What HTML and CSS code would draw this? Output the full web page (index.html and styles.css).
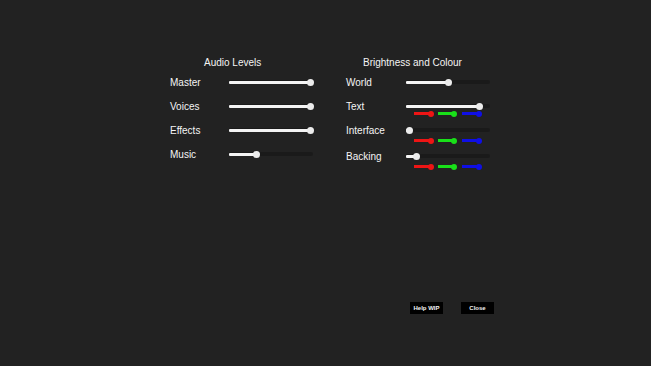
FILE: index.html
```html
<!DOCTYPE html>
<html lang="en">
<head>
    <meta charset="UTF-8">
    <meta name="viewport" content="width=device-width, initial-scale=1.0">
    <title>Settings</title>
    <link rel="stylesheet" href="styles.css">
</head>
<body>
    <main class="ajustes">
        <div class="columnas">
            <section class="columna columna-audio">
                <h2 class="titulo">Audio Levels</h2>

                <div class="grupo">
                    <div class="fila">
                        <span class="etiqueta">Master</span>
                        <div class="slider" style="--v:100%"><div class="rail"><span class="fill"></span><span class="knob"></span></div></div>
                    </div>
                </div>
                <div class="grupo">
                    <div class="fila">
                        <span class="etiqueta">Voices</span>
                        <div class="slider" style="--v:100%"><div class="rail"><span class="fill"></span><span class="knob"></span></div></div>
                    </div>
                </div>
                <div class="grupo">
                    <div class="fila">
                        <span class="etiqueta">Effects</span>
                        <div class="slider" style="--v:100%"><div class="rail"><span class="fill"></span><span class="knob"></span></div></div>
                    </div>
                </div>
                <div class="grupo">
                    <div class="fila">
                        <span class="etiqueta">Music</span>
                        <div class="slider" style="--v:31%"><div class="rail"><span class="fill"></span><span class="knob"></span></div></div>
                    </div>
                </div>
            </section>

            <section class="columna columna-brillo">
                <h2 class="titulo">Brightness and Colour</h2>

                <div class="grupo">
                    <div class="fila">
                        <span class="etiqueta">World</span>
                        <div class="slider" style="--v:50%"><div class="rail"><span class="fill"></span><span class="knob"></span></div></div>
                    </div>
                </div>

                <div class="grupo grupo-texto">
                    <div class="fila">
                        <span class="etiqueta">Text</span>
                        <div class="slider" style="--v:90%"><div class="rail"><span class="fill"></span><span class="knob"></span></div></div>
                    </div>
                    <div class="colores colores-juntos">
                        <div class="mini rojo" style="--v:84%"><span class="fill"></span><span class="knob"></span></div>
                        <div class="mini verde" style="--v:80%"><span class="fill"></span><span class="knob"></span></div>
                        <div class="mini azul" style="--v:85%"><span class="fill"></span><span class="knob"></span></div>
                    </div>
                </div>

                <div class="grupo grupo-interfaz">
                    <div class="fila">
                        <span class="etiqueta">Interface</span>
                        <div class="slider" style="--v:0%"><div class="rail"><span class="fill"></span><span class="knob"></span></div></div>
                    </div>
                    <div class="colores">
                        <div class="mini rojo" style="--v:84%"><span class="fill"></span><span class="knob"></span></div>
                        <div class="mini verde" style="--v:80%"><span class="fill"></span><span class="knob"></span></div>
                        <div class="mini azul" style="--v:85%"><span class="fill"></span><span class="knob"></span></div>
                    </div>
                </div>

                <div class="grupo grupo-fondo">
                    <div class="fila">
                        <span class="etiqueta">Backing</span>
                        <div class="slider" style="--v:10%"><div class="rail"><span class="fill"></span><span class="knob"></span></div></div>
                    </div>
                    <div class="colores">
                        <div class="mini rojo" style="--v:84%"><span class="fill"></span><span class="knob"></span></div>
                        <div class="mini verde" style="--v:80%"><span class="fill"></span><span class="knob"></span></div>
                        <div class="mini azul" style="--v:85%"><span class="fill"></span><span class="knob"></span></div>
                    </div>
                </div>
            </section>
        </div>

        <footer class="botones">
            <button class="boton">Help WIP</button>
            <button class="boton">Close</button>
        </footer>
    </main>
</body>
</html>
```

FILE: styles.css
```css
/* Pantalla de ajustes */
html, body {
    margin: 0;
    height: 100%;
}

body {
    background: #222222;
    color: #f4f4f4;
    font-family: "Liberation Sans", Arial, sans-serif;
    font-size: 10px;
}

.ajustes {
    height: 100vh;
    display: flex;
    flex-direction: column;
    box-sizing: border-box;
    padding-top: 57px;
    padding-bottom: 52px;
}

.columnas {
    display: flex;
    gap: 32px;
    padding-left: 170px;
}

.columna {
    display: flex;
    flex-direction: column;
    width: 144px;
}

.titulo {
    margin: 0 0 7px;
    height: 12px;
    line-height: 12px;
    font-size: 10px;
    font-weight: normal;
    white-space: nowrap;
}

.columna-audio .titulo {
    padding-left: 34px;
}

.columna-brillo .titulo {
    padding-left: 17px;
}

.grupo {
    margin-top: 12px;
}

.titulo + .grupo {
    margin-top: 0;
}

.columna-brillo .grupo-interfaz {
    margin-top: 7px;
}

.columna-brillo .grupo-fondo {
    margin-top: 6px;
}

.fila {
    display: flex;
    align-items: center;
    height: 12px;
}

.etiqueta {
    width: 59px;
    flex: none;
    line-height: 12px;
    padding-top: 1px;
}

.columna-brillo .etiqueta {
    width: 60px;
}

/* slider principal */
.slider {
    position: relative;
    width: 84px;
    height: 12px;
}

.slider::before {
    content: '';
    position: absolute;
    left: 0;
    right: 0;
    top: 4px;
    height: 4px;
    background: #1a1a1a;
    border-radius: 2px;
}

.rail {
    position: absolute;
    left: 3px;
    right: 3px;
    top: 0;
    bottom: 0;
}

.rail .fill {
    position: absolute;
    left: -3px;
    width: calc(var(--v) + 3px);
    top: 5px;
    height: 3px;
    background: #f4f4f4;
    border-radius: 1px;
}

.rail .knob {
    position: absolute;
    left: var(--v);
    top: 6.5px;
    width: 7px;
    height: 7px;
    margin: -3.5px 0 0 -3.5px;
    border-radius: 50%;
    background: #ececec;
}

/* sliders de color */
.colores {
    display: flex;
    gap: 4px;
    height: 8px;
    margin-left: 68px;
}

.colores-juntos {
    margin-top: -3px;
}

.mini {
    position: relative;
    width: 20px;
    height: 8px;
}

.mini .fill {
    position: absolute;
    left: 0;
    width: var(--v);
    top: 3px;
    height: 3px;
}

.mini .knob {
    position: absolute;
    left: var(--v);
    top: 4.5px;
    width: 6px;
    height: 6px;
    margin: -3px 0 0 -3px;
    border-radius: 50%;
}

.rojo .fill, .rojo .knob { background: #ee1515; }
.verde .fill, .verde .knob { background: #19e019; }
.azul .fill, .azul .knob { background: #0f0fe6; }

/* botones */
.botones {
    margin-top: auto;
    display: flex;
    gap: 18px;
    padding-left: 410px;
}

.boton {
    width: 33px;
    height: 12px;
    padding: 0;
    border: none;
    background: #000000;
    color: #f2f2f2;
    font-family: "Liberation Sans", Arial, sans-serif;
    font-size: 6px;
    font-weight: bold;
    line-height: 12px;
}
```
